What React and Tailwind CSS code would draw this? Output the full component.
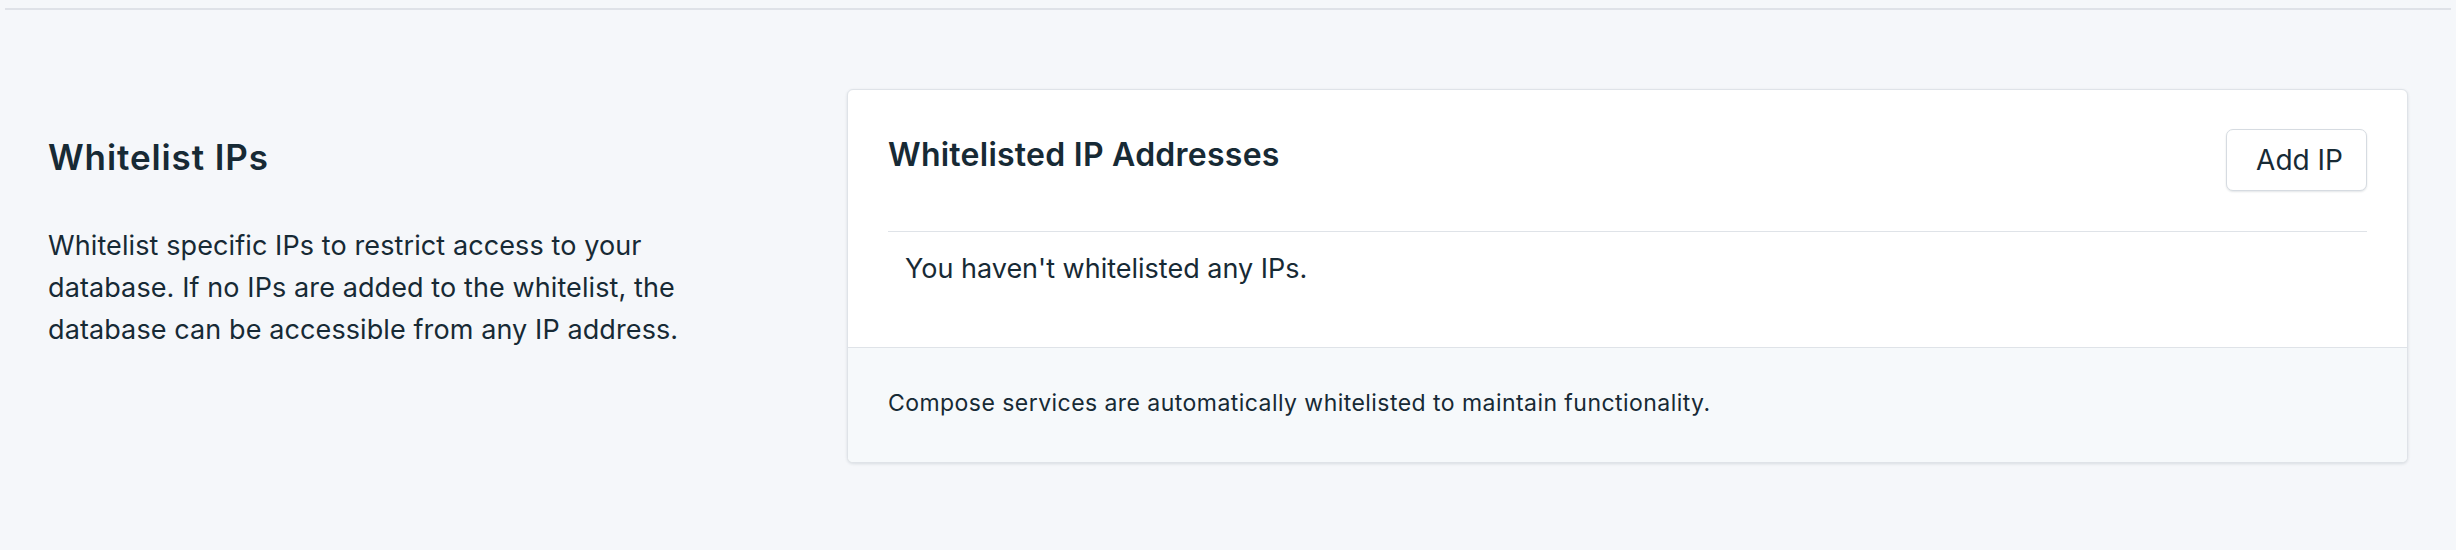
import React from 'react';

const font = { fontFamily: 'Inter, "Noto Sans", sans-serif' };

export default function App() {
  return (
    <div className="min-h-[550px] w-full bg-[#f5f7fa] text-[#172a35]" style={font}>
      <div className="mx-[5px] pt-[8px]">
        <div className="h-[2px] bg-[#dfe2e8]" />
      </div>

      <div className="flex items-start px-[48px] pt-[79px]">
        <div className="w-[799px] shrink-0 pt-[48px]">
          <h2 className="text-[35px] leading-[40px] font-semibold tracking-[0.9px]">Whitelist IPs</h2>
          <p className="mt-[48px] w-[680px] text-[27px] leading-[42px] tracking-[0.1px]">
            Whitelist specific IPs to restrict access to your database. If no IPs are added to the whitelist, the database can be accessible from any IP address.
          </p>
        </div>

        <div className="flex-1 overflow-hidden rounded-[6px] border border-[#dfe3e8] bg-white shadow-[0_1px_3px_rgba(20,40,60,0.12)]">
          <div className="px-[40px]">
            <div className="flex items-start justify-between border-b border-[#dfe3e8] pt-[39px] pb-[40px]">
              <h3 className="pt-[6px] text-[32px] leading-[40px] font-semibold tracking-[0.25px]">Whitelisted IP Addresses</h3>
              <button className="h-[62px] rounded-[7px] border-[1.5px] border-[#d6dbe1] bg-white pl-[29px] pr-[23px] text-[28px] leading-none shadow-[0_1px_2px_rgba(20,40,60,0.12)]">
                Add IP
              </button>
            </div>
            <div className="pl-[17px] pt-[19px] pb-[60px] text-[27px] leading-[36px]">
              You haven't whitelisted any IPs.
            </div>
          </div>
          <div className="border-t border-[#dfe3e8] bg-[#f6f9fb] px-[40px] pt-[40px] pb-[44px] text-[23px] leading-[30px] tracking-[0.45px]">
            Compose services are automatically whitelisted to maintain functionality.
          </div>
        </div>
      </div>
    </div>
  );
}
